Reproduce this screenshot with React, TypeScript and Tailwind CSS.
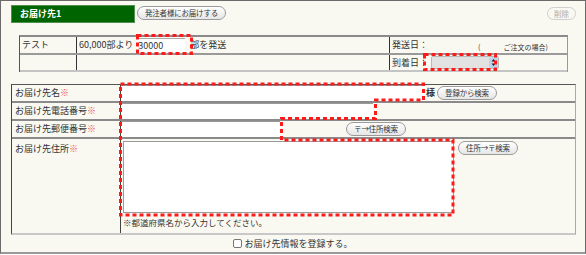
import React from "react";

const font = { fontFamily: '"Noto Sans CJK JP", "Noto Sans", sans-serif' };

const Pill = ({ children, className = "" }: { children: React.ReactNode; className?: string }) => (
  <span
    className={`inline-flex h-[14px] shrink-0 items-center justify-center whitespace-nowrap rounded-full border border-[#9a9a9a] bg-gradient-to-b from-white to-[#e6e6e6] px-[2px] text-[7.5px] leading-none tracking-[-0.2px] text-[#333] ${className}`}
  >
    {children}
  </span>
);

const Req = () => <span className="text-[#f05050]">※</span>;

export default function App() {
  return (
    <div className="h-[255px] w-[586px] bg-white" style={font}>
      <div className="relative h-[254px] w-[586px] border border-[#6a6a6a] border-b-2 border-b-[#999] bg-[#f9f9f2]">
        {/* header */}
        <div className="flex items-start pl-[10px] pt-[4px]">
          <div className="flex h-[18px] w-[124px] items-center border border-[#4f8f4f] bg-[#006400] pl-[8px] text-[9px] font-bold text-white">
            お届け先1
          </div>
          <Pill className="ml-[2px] mt-[1px] w-[89px]">発注者様にお届けする</Pill>
          <span className="ml-auto mr-[9px] mt-[2px] inline-flex h-[13px] w-[29px] items-center justify-center whitespace-nowrap rounded-full border border-[#cfcfcf] text-[7.5px] text-[#aaa]">
            削除
          </span>
        </div>

        {/* shipping quantity table */}
        <div className="ml-[18px] mt-[12px] w-[549px] border-l border-t-2 border-l-[#555] border-t-[#8a8a8a] border-r border-r-[#999] text-[9px] text-[#333]">
          <div className="flex h-[18px] border-b-2 border-[#9a9a9a]">
            <div className="flex w-[57px] items-center border-r border-[#333] pl-[2px]">テスト</div>
            <div className="flex w-[313px] items-center border-r border-[#333] pl-[2px]">
              <span>60,000部より</span>
              <span className="ml-[3px] flex h-[15px] w-[49px] items-center border-t border-[#aaa] bg-white pl-[2px]">30000</span>
              <span className="ml-[5px]">部を発送</span>
            </div>
            <div className="flex flex-1 items-center pl-[2px]">
              <span>発送日：</span>
              <span className="ml-[50px] mt-[4px] text-[7px]">(</span>
              <span className="ml-[23px] mt-[4px] text-[7px]">ご注文の場合)</span>
            </div>
          </div>
          <div className="flex h-[17px] border-b-2 border-[#c4c4c4]">
            <div className="w-[57px] border-r border-[#333]" />
            <div className="w-[313px] border-r border-[#333]" />
            <div className="flex flex-1 items-center pl-[2px]">
              <span>到着日：</span>
              <span className="ml-[3px] flex h-[13px] w-[68px] items-center justify-end rounded-[2px] border border-[#b8b8b8] bg-[#e2e2e2]">
                <svg width="9" height="11" viewBox="0 0 9 11" className="rounded-[2px]">
                  <rect width="9" height="11" rx="2" fill="#bcd3ea" />
                  <path d="M2.5 4.5 L4.5 2 L6.5 4.5 Z M2.5 6.5 L4.5 9 L6.5 6.5 Z" fill="#222" />
                </svg>
              </span>
            </div>
          </div>
        </div>

        {/* delivery address table */}
        <div className="ml-[10px] mt-[12px] w-[565px] border-l border-t border-l-[#444] border-t-[#555] border-r border-r-[#aaa] border-b-2 border-b-[#c8c8c8] text-[9px] text-[#333]">
          <div className="flex h-[18px] border-b-2 border-[#8a8a8a]">
            <div className="flex w-[109px] items-center border-r border-[#444] pl-[3px]">
              お届け先名<Req />
            </div>
            <div className="flex flex-1 items-center">
              <span className="h-[16px] w-[304px] border-t border-[#999] bg-white" />
              <span className="ml-[1px] font-bold">様</span>
              <Pill className="ml-[2px] h-[13px] w-[60px]">登録から検索</Pill>
            </div>
          </div>
          <div className="flex h-[18px] border-b-2 border-[#8a8a8a]">
            <div className="flex w-[109px] items-center border-r border-[#444] pl-[3px]">
              お届け先電話番号<Req />
            </div>
            <div className="flex flex-1 items-center">
              <span className="h-[16px] w-[252px] border-t border-[#999] bg-white" />
            </div>
          </div>
          <div className="flex h-[18px] border-b-2 border-[#8a8a8a]">
            <div className="flex w-[109px] items-center border-r border-[#444] pl-[3px]">
              お届け先郵便番号<Req />
            </div>
            <div className="flex flex-1 items-center">
              <span className="h-[16px] w-[159px] border-t border-[#999] bg-white" />
              <Pill className="ml-[66px] h-[13px] w-[60px]">〒→住所検索</Pill>
            </div>
          </div>
          <div className="flex h-[94px]">
            <div className="w-[109px] border-r border-[#444] pl-[3px] pt-[3px]">
              お届け先住所<Req />
            </div>
            <div className="flex-1 pl-[2px] pt-[2px]">
              <div className="flex items-start">
                <span className="h-[72px] w-[331px] border border-[#9a9a9a] bg-white" />
                <Pill className="ml-[4px] h-[13px] w-[60px]">住所→〒検索</Pill>
              </div>
              <div className="mt-[3px] text-[8.5px]">※都道府県名から入力してください。</div>
            </div>
          </div>
        </div>

        {/* register checkbox */}
        <div className="mt-[2px] flex items-center justify-center text-[9px] text-[#333]">
          <span className="mr-[2px] h-[9px] w-[9px] rounded-[2px] border border-[#777] bg-white" />
          お届け先情報を登録する。
        </div>

        {/* red dotted annotations */}
        <svg
          className="pointer-events-none absolute left-[-1px] top-[-1px]"
          width="586"
          height="255"
          viewBox="0 0 586 255"
        >
          <g fill="none" stroke="#ff1a1a" strokeWidth="3" strokeDasharray="4 3">
            <rect x="137.5" y="35.5" width="54" height="18" />
            <rect x="424.5" y="54.5" width="71" height="15" />
            <path d="M120.5 84 H423.5 V100 H375.5 V118.5 H281.5 V140 H453 V215 H120.5 Z" />
          </g>
        </svg>
      </div>
    </div>
  );
}
